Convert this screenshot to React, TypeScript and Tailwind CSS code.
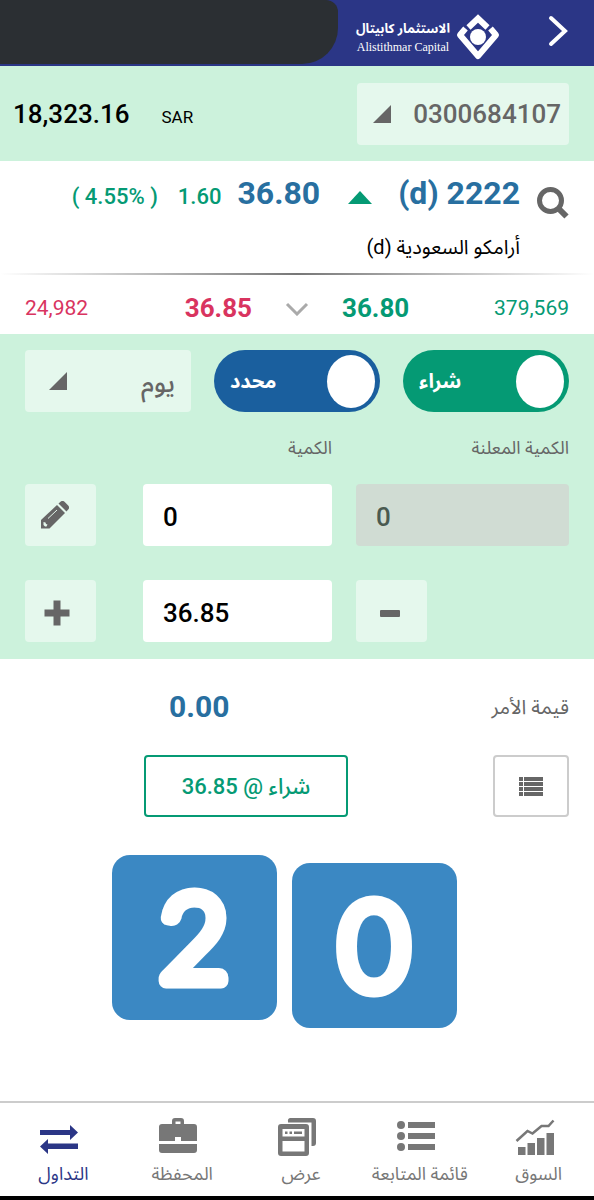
import { useState } from 'react';

const navItems = [
  { id: 'market', label: 'السوق' },
  { id: 'watchlist', label: 'قائمة المتابعة' },
  { id: 'view', label: 'عرض' },
  { id: 'portfolio', label: 'المحفظة' },
  { id: 'trade', label: 'التداول' },
];

function Logo() {
  return (
    <svg viewBox="0 0 44 48" className="h-12 w-11" fill="none" stroke="#fff" aria-hidden="true">
      <path d="m12.500 14.500 9.500-9 9.500 9" strokeWidth="6" />
      <path d="M9.500 15.500 4 22l18 21 18-21-5.500-6.500" strokeWidth="6" strokeLinejoin="round" />
      <circle cx="22" cy="24" r="8" fill="#fff" stroke="none" />
    </svg>
  );
}

function Corner({ className }: { className: string }) {
  return (
    <svg viewBox="0 0 18 18" className={`pointer-events-none absolute h-[18px] w-[18px] ${className}`} aria-hidden="true">
      <path d="M18 0v18H0Z" fill="#666" />
    </svg>
  );
}

function NavIcon({ id }: { id: string }) {
  return (
    <svg viewBox="0 0 40 40" className="h-10 w-10" fill="currentColor" aria-hidden="true">
      {id === 'market' && (
        <>
          <path d="M3 29h7.500v8H3zM12.500 25H20v12h-7.500zM22 20h7.500v17H22zM31.500 15H39v22h-7.500z" />
          <path d="m1.500 23 11-10 5 2.500 9-7.500h7l5-5.500" fill="none" stroke="currentColor" strokeWidth="2.500" />
        </>
      )}
      {id === 'watchlist' && (
        <>
          <circle cx="5" cy="7" r="4" />
          <circle cx="5" cy="18" r="4" />
          <circle cx="5" cy="29" r="4" />
          <path d="M12 4h27v6H12zM12 15h27v6H12zM12 26h27v6H12z" />
        </>
      )}
      {id === 'view' && (
        <>
          <path d="M11 3.500A3 3 0 0 1 13 0h23a3 3 0 0 1 3 3v22a3 3 0 0 1-3 3h-1.500V4.500H11Z" />
          <path
            fillRule="evenodd"
            d="M4 6h25a3 3 0 0 1 3 3v26a3 3 0 0 1-3 3H4a3 3 0 0 1-3-3V9a3 3 0 0 1 3-3Zm1.500 5v7.500h22V11Zm0 12v10.500h22V23Z"
          />
          <path d="M8 13.500h2.500v2.500H8zM12.500 13.500H15v2.500h-2.500zM17 13.500h8v2.500h-8z" />
        </>
      )}
      {id === 'portfolio' && (
        <>
          <path d="M14 7V3a3 3 0 0 1 3-3h6a3 3 0 0 1 3 3v4h-3.500V3.500h-5V7Z" />
          <path d="M4 6h32a3 3 0 0 1 3 3v14H23v-4h-6v4H1V9a3 3 0 0 1 3-3ZM1 26h38v6a3 3 0 0 1-3 3H4a3 3 0 0 1-3-3Z" />
        </>
      )}
      {id === 'trade' && (
        <path d="M1 12h30V7l8 7.500-8 7.500v-5H1ZM39 25.500v5.500H9v5L1 28.500 9 21v4.500Z" />
      )}
    </svg>
  );
}

function Toggle({ label, color }: { label: string; color: string }) {
  const [on, setOn] = useState(true);

  return (
    <label
      className={`flex h-[62px] cursor-pointer items-center justify-between rounded-full pr-[5px] pl-4 ${color}`}
    >
      <input
        type="checkbox"
        className="sr-only"
        checked={on}
        onChange={(e) => setOn(e.target.checked)}
      />
      <span className="h-[53px] w-12 rounded-[50%] bg-white" />
      <span className="text-xl font-bold text-white">{label}</span>
    </label>
  );
}

function KeycapDigit({ digit }: { digit: string }) {
  return (
    <svg viewBox="0 0 165 165" className="h-[165px] w-[165px]">
      <rect width="165" height="165" rx="18" fill="#3b88c3" />
      <text
        x="82"
        y="126"
        textAnchor="middle"
        fill="#fff"
        stroke="#fff"
        strokeWidth="15"
        strokeLinejoin="round"
        className="font-['Lato'] text-[120px] font-light"
      >
        {digit}
      </text>
    </svg>
  );
}

export default function App() {
  const [quantity, setQuantity] = useState('0');
  const [price, setPrice] = useState('36.85');

  const step = (delta: number) => setPrice((Number(price) + delta).toFixed(2));

  return (
    <div
      dir="rtl"
      className="flex min-h-screen flex-col bg-white font-['Roboto','Noto_Sans_Arabic','DejaVu_Sans',sans-serif]"
    >
      {/* Header */}
      <header className="relative flex h-[66px] items-center bg-[#2b3686] pr-6 text-white">
        <button type="button" aria-label="رجوع" className="mb-1">
          <svg viewBox="0 0 24 36" className="h-9 w-6" fill="none" stroke="#fff" strokeWidth="4" strokeLinecap="round">
            <path d="m5 5 14 13L5 31" />
          </svg>
        </button>
        <div className="mr-[46px] flex items-center gap-1.5 pt-2">
          <Logo />
          <div className="flex flex-col items-center">
            <span className="text-[13px] leading-5 font-bold whitespace-nowrap">الاستثمار كابيتال</span>
            <span className="font-['Liberation_Serif',serif] text-xs leading-4">Alistithmar Capital</span>
          </div>
        </div>
        <div className="absolute top-0 left-0 h-16 w-[338px] rounded-tr-xl rounded-br-[36px] bg-[#2b2f33]" />
      </header>

      {/* Account */}
      <section className="flex h-[95px] items-center justify-between bg-[#ccf2dc] pr-[25px] pl-[13px]">
        <div className="relative">
          <select
            aria-label="رقم الحساب"
            className="h-[62px] w-[212px] appearance-none rounded bg-[#e5f8ed] pt-0.5 pr-2 text-[26px] font-medium text-[#666]"
          >
            <option>0300684107</option>
          </select>
          <Corner className="top-[22px] left-4" />
        </div>
        <div dir="ltr" className="flex items-baseline gap-8 pt-0.5 text-black">
          <span className="text-[26px] font-medium">18,323.16</span>
          <span className="text-[17px]">SAR</span>
        </div>
      </section>

      {/* Quote */}
      <section className="flex h-[112px] items-start px-[25px] pt-3">
        <button type="button" aria-label="بحث" className="mt-[14px] ml-[17px]">
          <svg viewBox="0 0 32 32" className="h-8 w-8" fill="none" stroke="#666" aria-hidden="true">
            <circle cx="13.500" cy="13.500" r="11" strokeWidth="5" />
            <path d="m22 22 7.500 7.500" strokeWidth="6" />
          </svg>
        </button>
        <div>
          <div className="flex items-baseline text-[32px] leading-10 font-bold text-[#286fa0]">
            <span>2222 (d)</span>
            <svg viewBox="0 0 24 13" className="mr-[26px] h-[13px] w-6" aria-hidden="true">
              <path d="M12 0 24 13H0Z" fill="#059a74" />
            </svg>
            <span className="mr-7">36.80</span>
            <span className="mr-4 text-[22px] font-medium text-[#059a74]">1.60</span>
            <span dir="ltr" className="mr-5 text-[22px] font-medium whitespace-nowrap text-[#059a74]">
              ( 4.55% )
            </span>
          </div>
          <p className="mt-4 text-xl leading-7 text-black">أرامكو السعودية (d)</p>
        </div>
      </section>

      <div className="h-0.5 bg-linear-to-r from-transparent via-[#777] to-transparent" />

      {/* Bid / ask */}
      <section className="grid h-[59px] grid-cols-[1fr_auto_auto_auto_1fr] items-center px-[25px] pt-2 text-[21px]">
        <span className="text-[#059a74]">379,569</span>
        <span className="text-[26px] font-bold text-[#059a74]">36.80</span>
        <svg viewBox="0 0 24 14" className="mx-[33px] h-[14px] w-6" fill="none" stroke="#aaa" strokeWidth="3" aria-hidden="true">
          <path d="m2 2 10 10L22 2" />
        </svg>
        <span className="text-[26px] font-bold text-[#d9345f]">36.85</span>
        <span className="text-left text-[#d9345f]">24,982</span>
      </section>

      {/* Order form */}
      <form className="bg-[#ccf2dc] px-[25px] pt-4 pb-[17px]" onSubmit={(e) => e.preventDefault()}>
        <div className="grid grid-cols-3 gap-[23px]">
          <Toggle label="شراء" color="bg-[#059a74]" />
          <Toggle label="محدد" color="bg-[#1a5f9e]" />
          <div className="relative">
            <select
              aria-label="مدة الأمر"
              className="h-[62px] w-full appearance-none rounded bg-[#e5f8ed] pt-1 pr-4 text-[26px] font-medium text-[#666]"
            >
              <option>يوم</option>
            </select>
            <Corner className="top-[22px] left-6" />
          </div>
        </div>

        <div className="mt-6 grid grid-cols-[213fr_189fr_94fr] gap-x-6 text-lg leading-6 text-[#666]">
          <label htmlFor="disclosed">الكمية المعلنة</label>
          <label htmlFor="quantity">الكمية</label>
        </div>

        <div className="mt-6 grid grid-cols-[213fr_189fr_94fr] gap-x-6 gap-y-[34px]">
          <input
            id="disclosed"
            dir="ltr"
            disabled
            value="0"
            className="h-[62px] w-full min-w-0 rounded bg-[#d0dcd3] px-5 pt-1 text-[26px] font-medium text-[#4a5a50]"
          />
          <input
            id="quantity"
            dir="ltr"
            value={quantity}
            onChange={(e) => setQuantity(e.target.value)}
            className="h-[62px] w-full min-w-0 rounded bg-white px-5 pt-1 text-[26px] font-medium text-black"
          />
          <button
            type="button"
            aria-label="تعديل"
            className="flex h-[62px] w-[71px] items-center justify-center justify-self-end rounded bg-[#e5f8ed] pr-3"
          >
            <svg viewBox="0 0 28 28" className="h-7 w-7" fill="#666" aria-hidden="true">
              <path d="m17.500 2.500 2-1.700a3 3 0 0 1 4 0l3.700 3.700a3 3 0 0 1 0 4l-1.700 2Z" />
              <path d="m16 4 8 8L8.500 27.500H0V19Z" />
              <path d="m2.500 21 2 .5.500 1.500 1.500.5-1 2h-1.500l-1.500-1.500Z" fill="#e5f8ed" />
              <path d="M7 17.500 16 9" stroke="#e5f8ed" strokeWidth="1" />
            </svg>
          </button>

          <button
            type="button"
            aria-label="إنقاص السعر"
            onClick={() => step(-0.05)}
            className="flex h-[62px] w-[71px] items-center justify-center justify-self-end rounded bg-[#e5f8ed] pt-1 pr-1"
          >
            <span className="h-[7px] w-5 rounded-[1px] bg-[#666]" />
          </button>
          <input
            aria-label="السعر"
            dir="ltr"
            value={price}
            onChange={(e) => setPrice(e.target.value)}
            className="h-[62px] w-full min-w-0 rounded bg-white px-5 pt-1 text-[26px] font-medium text-black"
          />
          <button
            type="button"
            aria-label="زيادة السعر"
            onClick={() => step(0.05)}
            className="flex h-[62px] w-[71px] items-center justify-center justify-self-end rounded bg-[#e5f8ed] pt-1 pr-2"
          >
            <svg viewBox="0 0 26 26" className="h-[26px] w-[26px]" fill="#666" aria-hidden="true">
              <path d="M9.500.5h7v9h9v7h-9v9h-7v-9h-9v-7h9Z" />
            </svg>
          </button>
        </div>
      </form>

      {/* Order summary */}
      <section className="px-[25px] pt-7">
        <div className="flex items-center justify-between">
          <span className="text-xl text-[#666]">قيمة الأمر</span>
          <span className="ml-36 text-[30px] leading-10 font-bold text-[#286fa0]">0.00</span>
        </div>
        <div className="mt-7 flex justify-between">
          <button
            type="button"
            aria-label="قائمة الأوامر"
            className="flex h-[62px] w-[76px] items-center justify-center rounded border-2 border-[#ccc]"
          >
            <svg viewBox="0 0 24 19" className="h-[19px] w-6" fill="#666" aria-hidden="true">
              <path d="M0 0h4v4H0zM5 0h19v4H5zM0 5h4v4H0zM5 5h19v4H5zM0 10h4v4H0zM5 10h19v4H5zM0 15h4v4H0zM5 15h19v4H5z" />
            </svg>
          </button>
          <button
            type="button"
            className="ml-[119px] h-[62px] w-[204px] rounded border-2 border-[#059a74] text-[22px] font-medium text-[#059a74]"
          >
            شراء @ 36.85
          </button>
        </div>
      </section>

      <div dir="ltr" className="mt-[38px] flex justify-center gap-[15px] pr-[25px]">
        <KeycapDigit digit="2" />
        <div className="pt-2">
          <KeycapDigit digit="0" />
        </div>
      </div>

      {/* Bottom navigation */}
      <nav className="mt-auto grid h-[99px] grid-cols-5 border-t-2 border-b-4 border-t-[#ccc] border-b-black">
        {navItems.map((item) => (
          <a
            key={item.id}
            href={`#${item.id}`}
            className={`flex flex-col items-center pt-[15px] ${item.id === 'trade' ? 'text-[#2b3686]' : 'text-[#777]'}`}
          >
            <NavIcon id={item.id} />
            <span className="pl-2 text-lg leading-8 whitespace-nowrap">{item.label}</span>
          </a>
        ))}
      </nav>
    </div>
  );
}
